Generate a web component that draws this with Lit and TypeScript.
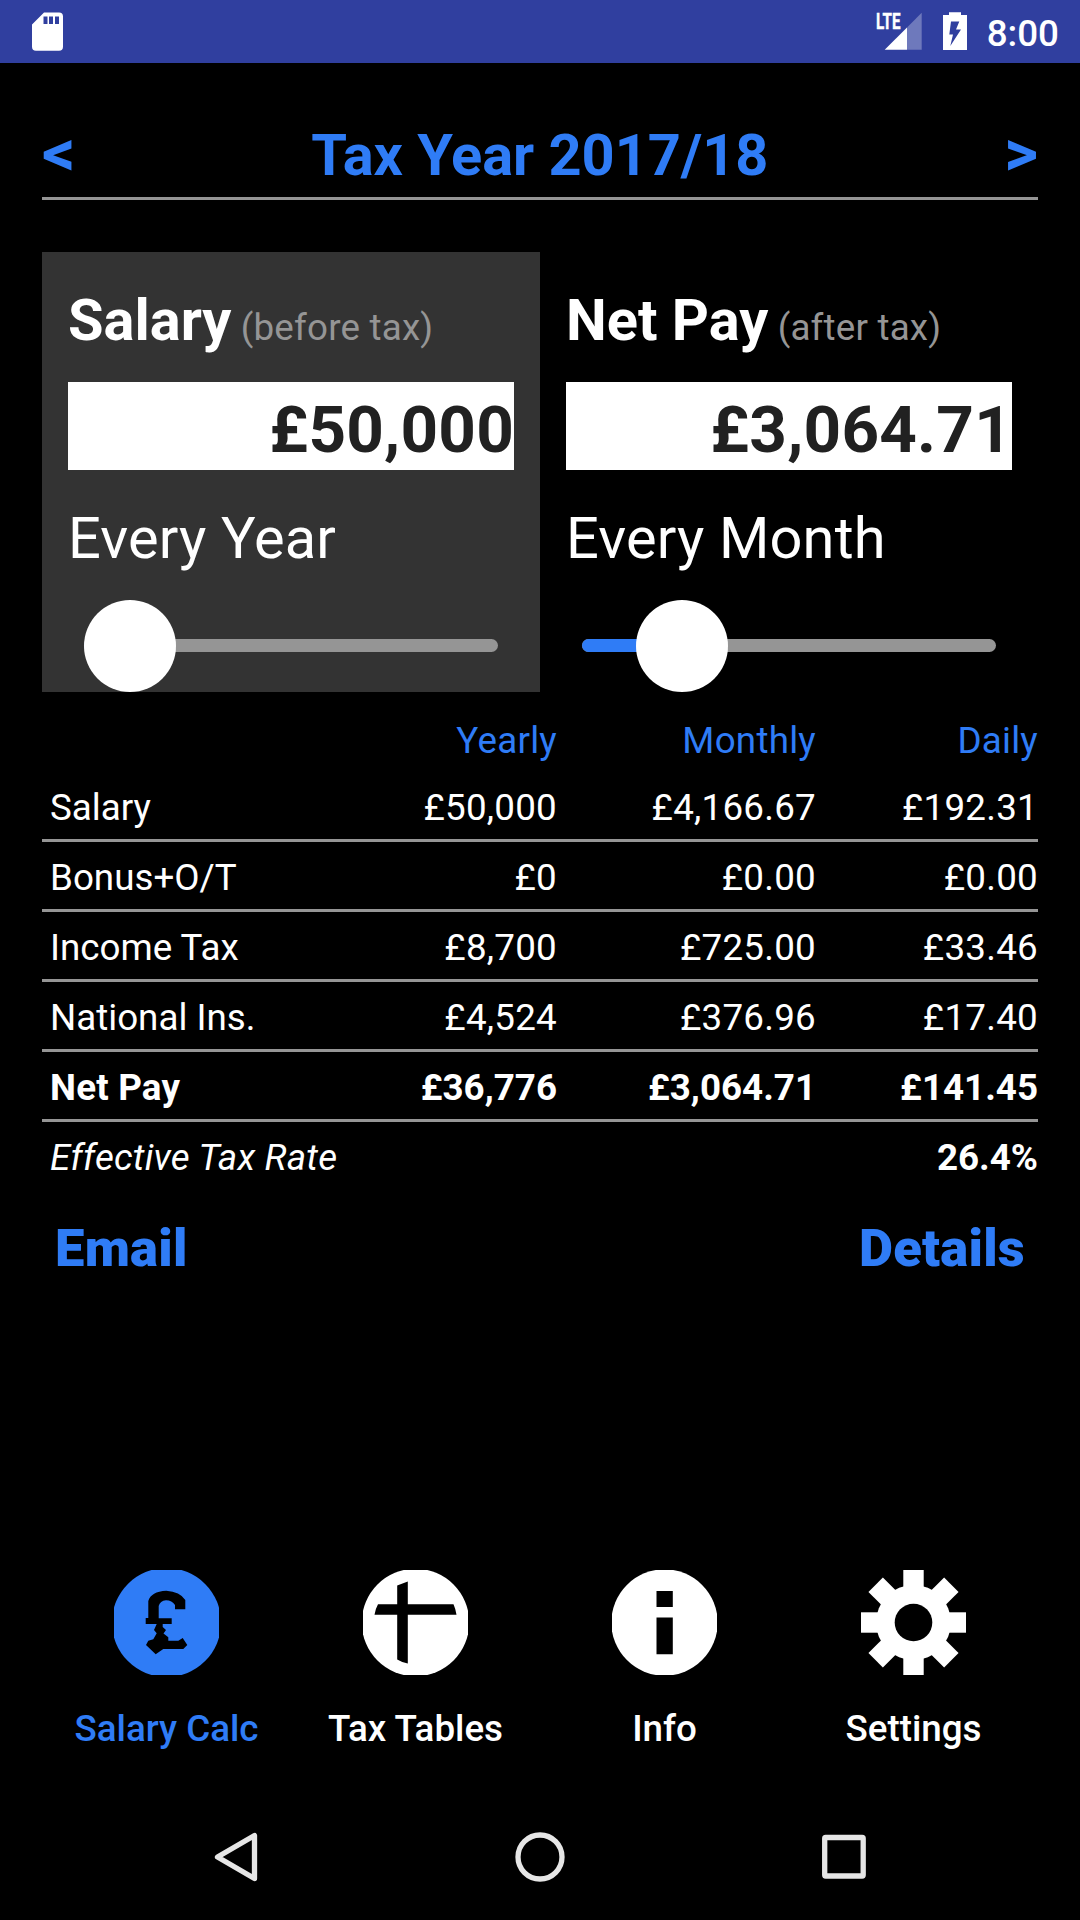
import { LitElement, html, svg, css } from "lit";
import { customElement, property } from "lit/decorators.js";
import { classMap } from "lit/directives/class-map.js";

interface TableRow {
  label: string;
  values: string[];
  style?: "strong" | "rate";
}

const ROWS: TableRow[] = [
  { label: "Salary", values: ["£50,000", "£4,166.67", "£192.31"] },
  { label: "Bonus+O/T", values: ["£0", "£0.00", "£0.00"] },
  { label: "Income Tax", values: ["£8,700", "£725.00", "£33.46"] },
  { label: "National Ins.", values: ["£4,524", "£376.96", "£17.40"] },
  { label: "Net Pay", values: ["£36,776", "£3,064.71", "£141.45"], style: "strong" },
  { label: "Effective Tax Rate", values: ["", "", "26.4%"], style: "rate" },
];

const ICONS = {
  pound: svg`
    <circle cx="52.5" cy="52.5" r="54.6" fill="currentColor" />
    <path d="M34.300 48V31Q37 21.500 52.300 20.700Q66 21.500 71.300 30V39.300H61V35Q58 30.500 52 30.300Q46 31 44.700 36V48.300H57.700V54H48.700V57L52 60L49.500 63.500L54.300 67.300V70.700H64.300L68.700 68L73.300 75L69.300 79H49.300L41.700 84.300L32 75L34.300 70.700L39.300 69.300L42.700 63.300L40 60L42.700 54H31.700V48Z" fill="#000" />`,
  tables: svg`
    <circle cx="52.5" cy="52.5" r="53.8" fill="currentColor" />
    <path d="M34.200 15.500L44.800 11.500V34.200H90.500Q92.500 38.500 93.500 44.800H44.800V93.500Q39 92.500 34.200 89.500V44.800H11.500Q12.500 38.500 15 34.200H34.200Z" fill="#000" />`,
  info: svg`
    <circle cx="52.5" cy="52.5" r="53.2" fill="currentColor" />
    <path d="M44.500 21H60.800V37H44.500ZM44.500 47.500H60.800V84.300H44.500Z" fill="#000" />`,
  settings: svg`
    <g fill="currentColor">
      <circle cx="52.5" cy="52.5" r="37.5" />
      ${[0, 45, 90, 135].map(
        (a) => svg`<rect x="42.3" y=${a % 90 ? -1 : 0} width="20.4" height=${a % 90 ? 107 : 105} transform="rotate(${a} 52.5 52.5)" />`
      )}
    </g>
    <circle cx="52.5" cy="52.5" r="18.8" fill="#000" />`,
};

const TABS: { icon: keyof typeof ICONS; label: string; active?: boolean }[] = [
  { icon: "pound", label: "Salary Calc", active: true },
  { icon: "tables", label: "Tax Tables" },
  { icon: "info", label: "Info" },
  { icon: "settings", label: "Settings" },
];

@customElement("status-bar")
export class StatusBar extends LitElement {
  static styles = css`
    :host { display: flex; align-items: center; justify-content: space-between; height: 63px;
      padding: 0 21px 0 32px; background: #303f9f; color: #fff; }
    svg { display: block; }
    .right { display: flex; align-items: center; }
    .battery { margin-left: 21px; }
    .clock { margin-left: 20px; height: 59px; padding-top: 4px; font-size: 36.75px; font-weight: 500; line-height: 59px; }
  `;
  render() {
    return html`
      <svg width="31" height="63" viewBox="0 0 31 63">
        <path fill="#fff" fill-rule="evenodd" d="M12 12.500H27Q31 12.500 31 16.500V46.700Q31 50.700 27 50.700H4Q0 50.700 0 46.700V24.500ZM11.500 16.500V24H15.500V16.500ZM17 16.500V24H21V16.500ZM23 16.500V24H27V16.500Z" />
      </svg>
      <div class="right">
        <svg width="46" height="63" viewBox="0 0 46 63">
          <text x="0" y="29" font-family="Roboto" font-weight="700" font-size="22" textLength="24.500" lengthAdjust="spacingAndGlyphs" fill="#fff" stroke="#fff" stroke-width=".4">LTE</text>
          <path d="M45.700 12.700V49.700H31V27.400Z" fill="#fff" fill-opacity=".3" />
          <path d="M31 27.400V49.700H8.700Z" fill="#fff" />
        </svg>
        <svg class="battery" width="24" height="63" viewBox="0 0 24 63">
          <path fill="#fff" fill-rule="evenodd" d="M6 12.300H18V15H24V50H0V15H6ZM8 21.500L6.300 34.500H10L7.300 46L18 29.500H13L16.300 21.500Z" />
        </svg>
        <div class="clock">8:00</div>
      </div>`;
  }
}

@customElement("pay-slider")
export class PaySlider extends LitElement {
  @property({ type: Number }) ratio = 0;
  static styles = css`
    :host { display: grid; align-items: start; height: 92px; margin: 0 16px; }
    .track, .thumb-row { grid-area: 1 / 1; }
    .track { height: 13px; margin-top: 39px; border-radius: 7px; background: #959595; overflow: hidden; }
    .fill { height: 100%; background: #2f7cf6; }
    .thumb-row { display: flex; }
    .thumb { width: 92px; height: 92px; border-radius: 50%; background: #fff; }
  `;
  render() {
    const left = this.ratio * 322;
    return html`
      <div class="track"><div class="fill" style="width:${left + 46}px"></div></div>
      <div class="thumb-row"><div class="thumb" style="margin-left:${left}px"></div></div>`;
  }
}

@customElement("pay-card")
export class PayCard extends LitElement {
  @property() heading = "";
  @property() note = "";
  @property() amount = "";
  @property() period = "";
  @property({ type: Number }) ratio = 0;
  static styles = css`
    :host { display: block; padding: 34px 26px 0; color: #fff; }
    .heading { font-size: 57.75px; font-weight: 700; line-height: 68px; height: 68px; white-space: nowrap; }
    .note { font-size: 36.75px; font-weight: 400; line-height: 1; letter-spacing: 0.2px; color: #959595; }
    .amount { margin-top: 28px; height: 81px; padding-top: 7px; line-height: 81px; background: #fff; color: #212121;
      font-size: 65.625px; font-weight: 700; letter-spacing: 0.2px; text-align: right; }
    .period { margin: 34px 0 28px; font-size: 57.75px; letter-spacing: 0.15px; line-height: 68px; height: 68px; }
  `;
  render() {
    return html`
      <div class="heading">${this.heading}<span class="note"> ${this.note}</span></div>
      <div class="amount">${this.amount}</div>
      <div class="period">${this.period}</div>
      <pay-slider .ratio=${this.ratio}></pay-slider>`;
  }
}

@customElement("app-root")
export class AppRoot extends LitElement {
  static styles = css`
    :host { display: flex; flex-direction: column; width: 1080px; height: 1920px; overflow: hidden;
      background: #000; color: #fff; font-family: Roboto, sans-serif; }
    main { flex: 1; padding: 0 42px; }
    .year { display: flex; justify-content: space-between; align-items: baseline; padding: 56px 0 10px; height: 68px;
      border-bottom: 3px solid #959595; color: #2f7cf6; font-size: 57.75px; font-weight: 700; line-height: 68px; }
    .title { letter-spacing: -0.05px; }
    .arrow { font-size: 65.625px; line-height: 68px; }
    .cards { display: grid; grid-template-columns: 1fr 1fr; margin-top: 52px; height: 440px; }
    .selected { background: #333; }
    .unselected { padding-right: 26px; }
    .row { display: grid; grid-template-columns: 342px 165px 259px 222px; padding: 4px 0 0 8px; height: 63px;
      border-bottom: 3px solid #959595; font-size: 36.75px; line-height: 63px; white-space: nowrap; }
    .num { text-align: right; letter-spacing: 0.25px; }
    .head { padding-top: 27px; height: 53px; line-height: 43px; border: 0; color: #2f7cf6; }
    .strong { font-weight: 700; }
    .strong .num { letter-spacing: 0; }
    .strong .label { letter-spacing: 0.2px; }
    .rate { border: 0; }
    .rate .label { font-style: italic; letter-spacing: 0.2px; }
    .rate .num { font-weight: 700; letter-spacing: 0; }
    .links { display: flex; justify-content: space-between; padding: 27.5px 13px 0; font-size: 52.5px; font-weight: 900;
      letter-spacing: 0.25px; line-height: 62px; color: #2f7cf6; }
    .tabs { display: grid; grid-template-columns: repeat(4, 1fr); padding: 0 42px; height: 224px; }
    .tab { display: flex; flex-direction: column; align-items: center; font-size: 36.75px; font-weight: 500; line-height: 43px; }
    .tab.active { color: #2f7cf6; }
    .tab svg { display: block; overflow: hidden; margin-bottom: 32px; }
    .nav { display: flex; height: 126px; }
    .nav svg { display: block; width: 1080px; }
  `;
  render() {
    return html`
      <status-bar></status-bar>
      <main>
        <div class="year"><span class="arrow">&lt;</span><span class="title">Tax Year 2017/18</span><span class="arrow">&gt;</span></div>
        <div class="cards">
          <pay-card class="selected" heading="Salary" note="(before tax)" amount="£50,000" period="Every Year"></pay-card>
          <pay-card class="unselected" heading="Net Pay" note="(after tax)" amount="£3,064.71" period="Every Month" .ratio=${1 / 6}></pay-card>
        </div>
        <div class="row head"><span></span>${["Yearly", "Monthly", "Daily"].map((h) => html`<span class="num">${h}</span>`)}</div>
        ${ROWS.map(
          (r) => html`<div class=${classMap({ row: true, strong: r.style === "strong", rate: r.style === "rate" })}>
            <span class="label">${r.label}</span>${r.values.map((v) => html`<span class="num">${v}</span>`)}
          </div>`
        )}
        <div class="links"><span>Email</span><span>Details</span></div>
      </main>
      <div class="tabs">
        ${TABS.map(
          (t) => html`<div class=${classMap({ tab: true, active: !!t.active })}>
            <svg width="105" height="105" viewBox="0 0 105 105">${ICONS[t.icon]}</svg>${t.label}
          </div>`
        )}
      </div>
      <div class="nav">
        <svg width="1080" height="126" viewBox="0 0 1080 126" fill="none" stroke="#e6e6e6" stroke-width="5.300" stroke-linejoin="round">
          <path d="M254.500 41.500V84.500L217.500 63Z" />
          <circle cx="540" cy="63" r="22" />
          <rect x="824.700" y="43.500" width="38.500" height="38.500" rx="1" />
        </svg>
      </div>`;
  }
}
